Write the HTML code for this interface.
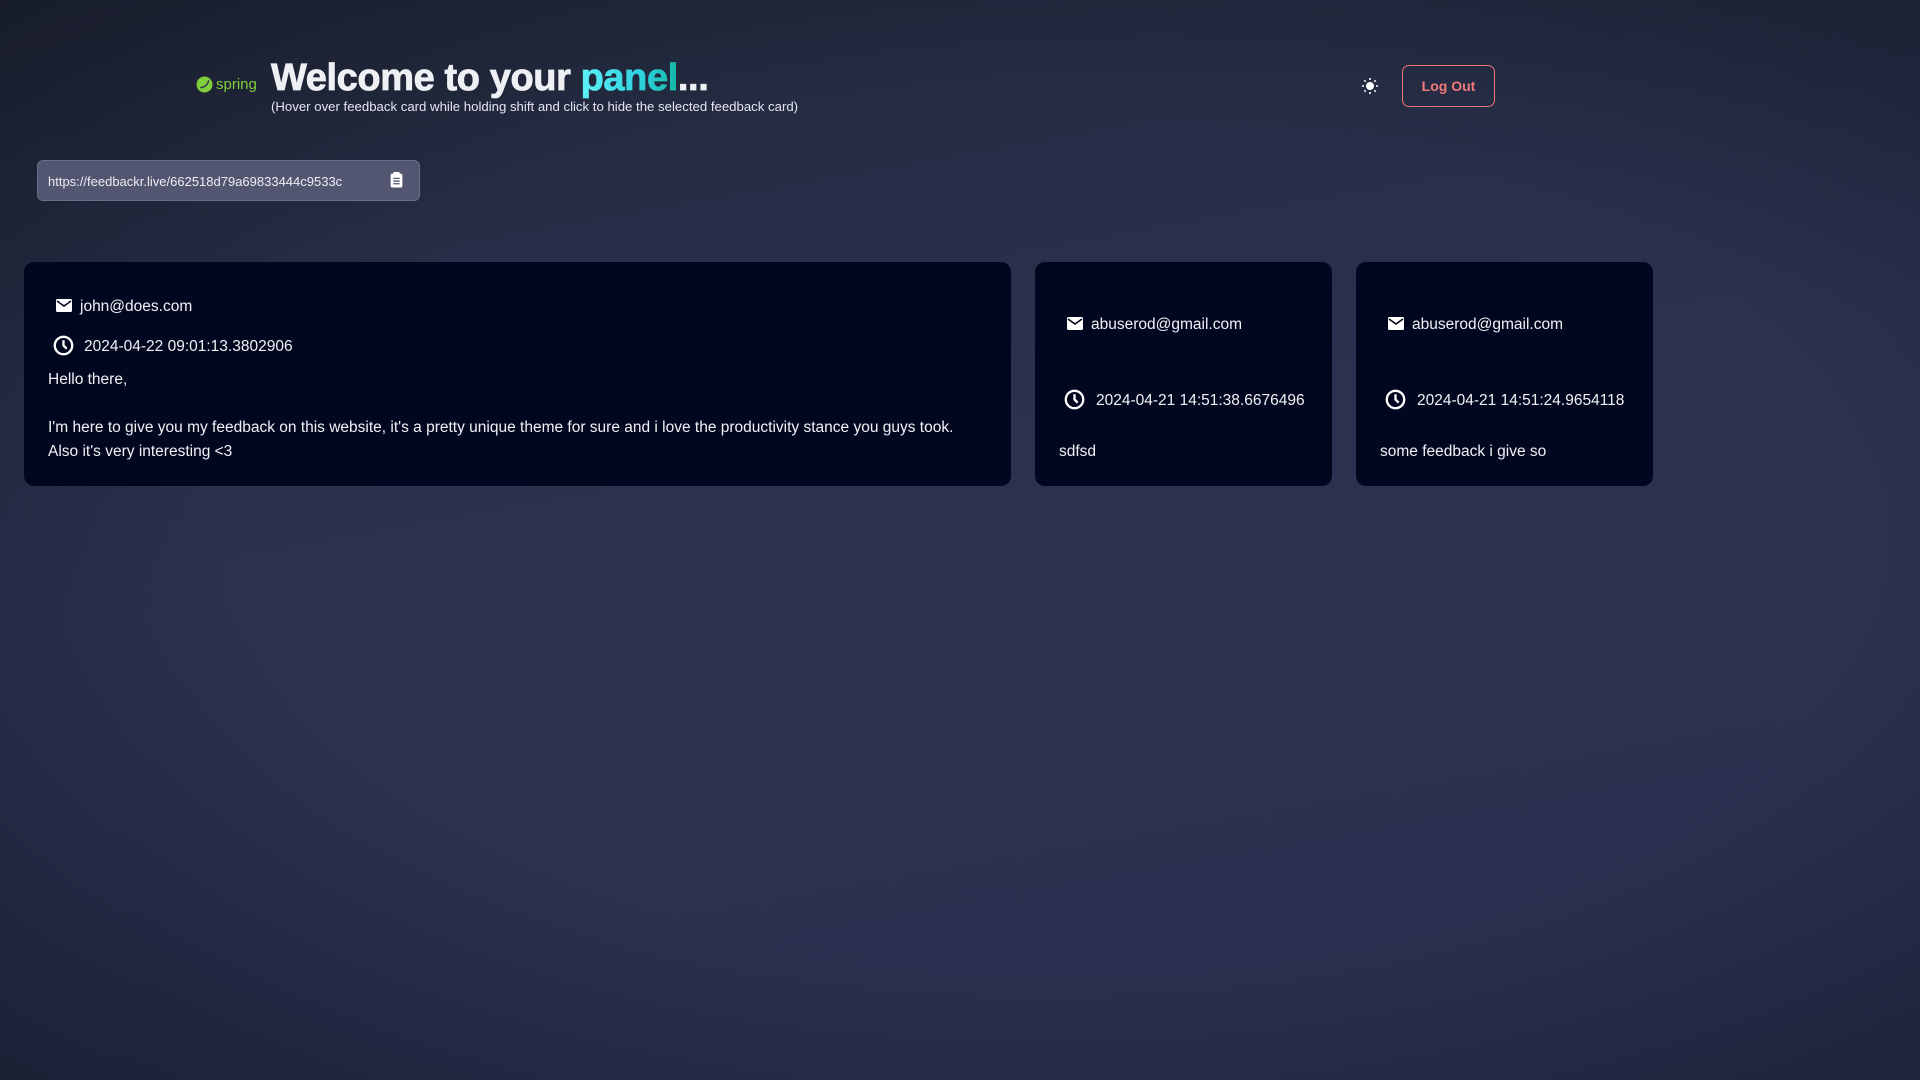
<!DOCTYPE html>
<html><head><meta charset="utf-8"><style>
*{margin:0;padding:0;box-sizing:border-box}
html,body{width:1920px;height:1080px;overflow:hidden}
body{font-family:"Liberation Sans",sans-serif;color:#f1f1f5;position:relative;
background:radial-gradient(ellipse at 55% 50%,rgba(0,0,0,0) 55%,rgba(10,12,20,.45) 100%),linear-gradient(170deg,#232a3d 0%,#2a3250 45%,#2a3150 100%);}
.abs{position:absolute}
.title{left:271px;top:57px;font-size:38px;font-weight:900;letter-spacing:-0.4px;color:#eef0f4;white-space:nowrap;-webkit-text-stroke:0.8px #eef0f4}
.pa{background:linear-gradient(90deg,#5ef0f8,#2fd3e0 60%,#14b8a6);-webkit-background-clip:text;background-clip:text;color:transparent;-webkit-text-stroke:0.8px transparent}
.sub{left:271px;top:99px;font-size:13.2px;color:#e6e6f2;white-space:nowrap}
.spring{left:196px;top:76px;font-size:15px;color:#7fcf3c;display:flex;align-items:center;gap:3px}
.logout{left:1402px;top:65px;width:93px;height:42px;border:1.5px solid #f07575;border-radius:7px;color:#f37b7b;font-size:14px;font-weight:bold;display:flex;align-items:center;justify-content:center}
.url{left:37px;top:160px;width:383px;height:41px;background:#525670;border:1px solid #6a6e86;border-radius:6px;font-size:13px;color:#eceef4;padding:13px 0 0 10px}
.card{top:262px;height:224px;background:#020720;border-radius:10px}
.t{font-size:15.5px;color:#f1f1f5;white-space:nowrap}
</style></head><body>
<div class="abs spring"><svg width="17" height="17" viewBox="0 0 16 16"><circle cx="8" cy="8" r="7.5" fill="#7fcf3c"/><path d="M4 11c3 0 7-2 8-7" stroke="#2a3150" stroke-width="1.3" fill="none"/></svg>spring</div>
<div class="abs title">Welcome to your <span class="pa">panel</span>...</div>
<div class="abs sub">(Hover over feedback card while holding shift and click to hide the selected feedback card)</div>
<svg class="abs" style="left:1361px;top:77px" width="18" height="18" viewBox="0 0 18 18" fill="#fff"><circle cx="9" cy="9" r="4"/><g stroke="#fff" stroke-width="1.6"><path d="M9 1v2M9 15v2M1 9h2M15 9h2M3.3 3.3l1.4 1.4M13.3 13.3l1.4 1.4M3.3 14.7l1.4-1.4M13.3 4.7l1.4-1.4"/></g></svg>
<div class="abs logout">Log Out</div>
<div class="abs url">https://feedbackr.live/662518d79a69833444c9533c</div>
<svg class="abs" style="left:390px;top:172px" width="13" height="16" viewBox="0 0 12 15"><rect x="0.5" y="1.5" width="11" height="13" rx="1.5" fill="#fff"/><rect x="3" y="0" width="6" height="3" rx="1" fill="#fff"/><path d="M3 6h6M3 8.5h6M3 11h6" stroke="#525670" stroke-width="1.2"/></svg>

<div class="abs card" style="left:24px;width:987px"></div>
<div class="abs card" style="left:1035px;width:297px"></div>
<div class="abs card" style="left:1356px;width:297px"></div>

<!-- card1 -->
<svg class="abs" style="left:56px;top:299px" width="16" height="13" viewBox="0 0 16 13"><rect width="16" height="13" rx="1.5" fill="#fff"/><path d="M1 2l7 5 7-5" stroke="#020720" stroke-width="1.6" fill="none"/></svg>
<div class="abs t" style="left:80px;top:298px">john@does.com</div>
<svg class="abs" style="left:53px;top:335px" width="21" height="21" viewBox="0 0 20 20"><circle cx="10" cy="10" r="8.3" stroke="#fff" stroke-width="2.2" fill="none"/><path d="M10 5v5l3 3" stroke="#fff" stroke-width="2.2" fill="none"/></svg>
<div class="abs t" style="left:84px;top:338px">2024-04-22 09:01:13.3802906</div>
<div class="abs t" style="left:48px;top:371px">Hello there,</div>
<div class="abs t" style="left:48px;top:419px">I'm here to give you my feedback on this website, it's a pretty unique theme for sure and i love the productivity stance you guys took.</div>
<div class="abs t" style="left:48px;top:443px">Also it's very interesting &lt;3</div>

<!-- card2 -->
<svg class="abs" style="left:1067px;top:317px" width="16" height="13" viewBox="0 0 16 13"><rect width="16" height="13" rx="1.5" fill="#fff"/><path d="M1 2l7 5 7-5" stroke="#020720" stroke-width="1.6" fill="none"/></svg>
<div class="abs t" style="left:1091px;top:316px">abuserod@gmail.com</div>
<svg class="abs" style="left:1064px;top:389px" width="21" height="21" viewBox="0 0 20 20"><circle cx="10" cy="10" r="8.3" stroke="#fff" stroke-width="2.2" fill="none"/><path d="M10 5v5l3 3" stroke="#fff" stroke-width="2.2" fill="none"/></svg>
<div class="abs t" style="left:1096px;top:392px">2024-04-21 14:51:38.6676496</div>
<div class="abs t" style="left:1059px;top:443px">sdfsd</div>

<!-- card3 -->
<svg class="abs" style="left:1388px;top:317px" width="16" height="13" viewBox="0 0 16 13"><rect width="16" height="13" rx="1.5" fill="#fff"/><path d="M1 2l7 5 7-5" stroke="#020720" stroke-width="1.6" fill="none"/></svg>
<div class="abs t" style="left:1412px;top:316px">abuserod@gmail.com</div>
<svg class="abs" style="left:1385px;top:389px" width="21" height="21" viewBox="0 0 20 20"><circle cx="10" cy="10" r="8.3" stroke="#fff" stroke-width="2.2" fill="none"/><path d="M10 5v5l3 3" stroke="#fff" stroke-width="2.2" fill="none"/></svg>
<div class="abs t" style="left:1417px;top:392px">2024-04-21 14:51:24.9654118</div>
<div class="abs t" style="left:1380px;top:443px">some feedback i give so</div>
</body></html>
